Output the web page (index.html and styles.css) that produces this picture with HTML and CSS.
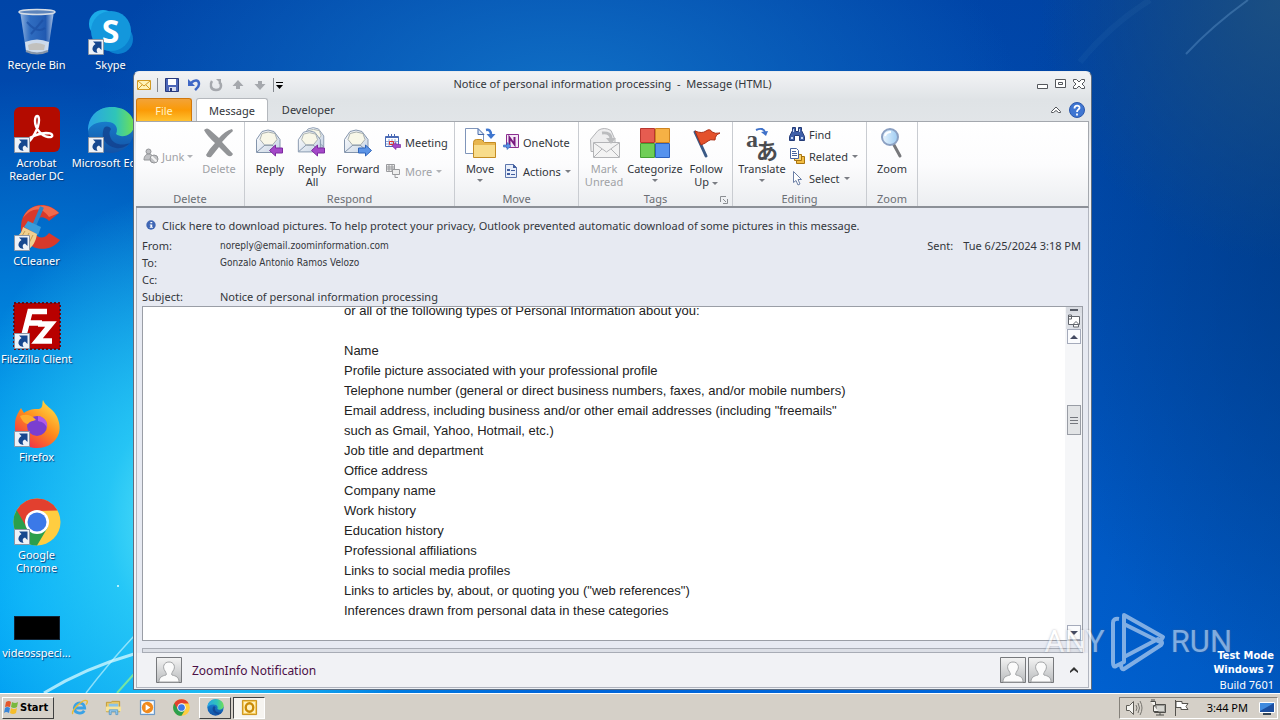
FILE: index.html
```html
<!DOCTYPE html>
<html lang="en">
<head>
<meta charset="utf-8">
<title>Notice of personal information processing - Message (HTML)</title>
<link rel="stylesheet" href="styles.css">
</head>
<body>
<svg class="defs" aria-hidden="true">
  <defs>
    <linearGradient id="g-env" x1="0" y1="0" x2="1" y2="1"><stop offset="0" stop-color="#fff"/><stop offset="1" stop-color="#c6d3e3"/></linearGradient>
    <linearGradient id="g-bin" x1="0" x2="1"><stop offset="0" stop-color="#c9dcf5" stop-opacity=".75"/><stop offset=".3" stop-color="#4f86cf" stop-opacity=".6"/><stop offset=".75" stop-color="#2f62b4" stop-opacity=".7"/><stop offset="1" stop-color="#d5e4f7" stop-opacity=".85"/></linearGradient>
    <linearGradient id="g-edge1" x1="0" x2="1"><stop offset="0" stop-color="#2aa3e6"/><stop offset=".6" stop-color="#2fc5b8"/><stop offset="1" stop-color="#6fe055"/></linearGradient>
    <linearGradient id="g-edge2" x1="0" y1="0" x2="0" y2="1"><stop offset="0" stop-color="#1a8fdc"/><stop offset="1" stop-color="#1352a6"/></linearGradient>
    <linearGradient id="g-fox" x1=".9" y1="0" x2=".2" y2="1"><stop offset="0" stop-color="#ffe84a"/><stop offset=".5" stop-color="#ff8b1c"/><stop offset="1" stop-color="#f0264f"/></linearGradient>
    <linearGradient id="g-mag" x1="0" x2="1"><stop offset="0" stop-color="#eaf6ff"/><stop offset="1" stop-color="#9ccbf2"/></linearGradient>
    <linearGradient id="g-person" x1="0" y1="0" x2="0" y2="1"><stop offset="0" stop-color="#f4f4f4"/><stop offset="1" stop-color="#b9bbbd"/></linearGradient>

    <symbol id="i-shortcut" viewBox="0 0 16 16"><path fill="#eef2f8" stroke="#8c96a6" d="M.5.5h15v15H.5z"/><path fill="#16478f" d="M5 2.500h8.500V11L11 8.500C8.500 9.500 8 11 9.500 14 4 13.500 2.500 8.500 7.500 5z"/></symbol>
    <symbol id="i-bin" viewBox="0 0 48 48"><path fill="url(#g-bin)" d="M7 3h34l-6 40q-11 5-22 0z"/><path fill="#e9eef5" d="M12 34q12-5 24 0l-1 9q-11 4-22 0z" opacity=".85"/><path fill="#bdb6aa" d="M15 37q8-4 17 0l-1 5H16z" opacity=".7"/><path stroke="#1b4fa3" stroke-width="2" fill="none" opacity=".7" d="M14 14q10 12 18 6M18 26l12-14"/><ellipse cx="24" cy="4" rx="18" ry="2.500" fill="#5d84bb" stroke="#d6dde6" stroke-width="1.500"/><path fill="none" stroke="#8796a9" stroke-width="2" d="M13 43q11 5 22 0"/></symbol>
    <symbol id="i-skype" viewBox="0 0 48 48"><circle cx="16" cy="16" r="14" fill="#1cabe8"/><circle cx="31" cy="31" r="15" fill="#0b80cf"/><circle cx="24" cy="23" r="20" fill="#1397dc"/></symbol>
    <symbol id="i-acrobat" viewBox="0 0 48 48"><rect x="1" y="1" width="46" height="45" rx="6" fill="#b30b00"/><path fill="none" stroke="#fff" stroke-width="2.400" stroke-linejoin="round" d="M14 37c-4-2 7-9 19-10 8 0 8 5 2 4-7-1-13-9-13-16 0-7 4-6 4-1 0 8-7 20-12 23z"/></symbol>
    <symbol id="i-edge" viewBox="0 0 48 48"><circle cx="24" cy="24" r="23" fill="url(#g-edge2)"/><path fill="url(#g-edge1)" d="M1 25C1 9 12 1 25 1c14 0 22 9 22 18 0 10-12 14-18 9 3-6-1-12-8-12C11 15 3 19 1 25z"/><path fill="#123f8c" opacity=".75" d="M17 22c-4 10 2 18 12 20 6 1 11-2 14-5-7 3-18 2-20-7-1-4 0-5 1-7-2-3-5-3-7-1z"/></symbol>
    <symbol id="i-ccleaner" viewBox="0 0 48 48"><path fill="#d8392b" d="M46 9C32-6 9 1 8 22c-1 22 26 31 39 14l-11-7c-6 8-15 5-15-6 0-10 9-13 15-6z"/><path fill="#f06a4d" d="M46 9C34-3 15 0 10 14c9-11 19-11 26-1z"/><path stroke="#2b86cb" stroke-width="4" d="M29 3 21 22"/><path fill="#3a9ddb" d="m15 17 13 6-3 8-14-8z"/><path fill="#f0d08f" d="M10 23 24 30c-1 8-5 13-9 16L1 34c5-2 8-6 9-11z"/><path stroke="#c79a50" fill="none" d="M12 27 6 37M16 29l-6 12M20 31l-6 12"/></symbol>
    <symbol id="i-filezilla" viewBox="0 0 48 48"><path fill="#b80000" d="M1 1h46v46H1z"/><path fill="none" stroke="#5f0d1a" stroke-width="2" stroke-dasharray="2 2" d="M1 1h46v46H1z"/><path fill="none" stroke="#fff" stroke-width="5.500" d="M34 9.500H17L11 33M13.500 21H29M25 22h13L24 39h15"/></symbol>
    <symbol id="i-firefox" viewBox="0 0 48 48"><path fill="url(#g-fox)" d="M30 0c2 6 9 8 13 15 2 3 5 11 3 18-3 9-11 15-22 15C10 48 1 38 2 25c0-8 3-12 6-17l3 5c2-2 4-2 6-3 4-2 9 0 11-2 2-2 1-5 2-8z"/><circle cx="24" cy="26" r="10" fill="#7a3ed0"/><path fill="#ffac2e" d="M7 16c5-2 11-2 16 4-3 1-6 1-8 4-3 0-6-3-8-8z"/><path fill="#b05ae8" d="M25 16c7 1 10 6 9 12-2-5-5-6-9-7z"/></symbol>
    <symbol id="i-chrome" viewBox="0 0 48 48"><circle cx="24" cy="24" r="23.500" fill="#ffcd40"/><path fill="#2b9f4c" d="M3.700 12A23.500 23.500 0 0 0 24 47.500L35 29 24 24z"/><path fill="#e2402f" d="M3.700 12.300A23.500 23.500 0 0 1 44.500 12.500L24 13l-10 17z"/><circle cx="24" cy="24" r="12" fill="#fff"/><circle cx="24" cy="24" r="9.500" fill="#3b79e8"/></symbol>

    <symbol id="i-mail" viewBox="0 0 16 16"><path fill="#fff3b8" stroke="#d19a24" d="M1.500 3.500h13v9h-13z"/><path fill="none" stroke="#d19a24" d="m2 4 6 5 6-5M2 12l4-4m8 4-4-4"/></symbol>
    <symbol id="i-save" viewBox="0 0 16 16"><path fill="#4c66b8" stroke="#27397c" d="M1.500 1.500h13v13h-13z"/><path fill="#fff" d="M4 2h8v6H4z"/><path fill="#d6dcef" d="M5 10h7v4H5z"/><path fill="#27397c" d="M6 11h2v3H6z"/></symbol>
    <symbol id="i-undo" viewBox="0 0 16 16"><path fill="none" stroke="#3f67c5" stroke-width="2.500" d="M5 6c4-4 8-3 8 1 0 3-2 4-4 6"/><path fill="#3f67c5" d="M2 2v7h7z"/></symbol>
    <symbol id="i-redo" viewBox="0 0 16 16"><path fill="none" stroke="#a5a8ad" stroke-width="2.500" d="M4 4c-2 3-2 9 4 9s6-6 3-8"/><path fill="#a5a8ad" d="M8 2h5v5z"/></symbol>
    <symbol id="i-up" viewBox="0 0 16 16"><path fill="#a5a8ad" d="m8 3 5.500 6H10v3H6V9H2.500z"/></symbol>
    <symbol id="i-down" viewBox="0 0 16 16"><path fill="#a5a8ad" d="M8 13 2.500 7H6V4h4v3h3.500z"/></symbol>

    <symbol id="i-junk" viewBox="0 0 16 16"><g fill="#c0c1c4" stroke="#929497"><circle cx="5.500" cy="3.500" r="2.500"/><path d="M1 12c0-4 2-6 5-6s4 2 4 6z"/><circle cx="11" cy="11" r="4"/></g><path stroke="#f4f4f4" stroke-width="2" d="m8.500 8.500 5 5"/></symbol>
    <symbol id="i-delete" viewBox="0 0 32 32"><path fill="#929497" d="M1 3q3-3 6 0l9 8q6-7 13-9l1 2Q24 9 19 15l11 12q-2 4-6 1l-8-8q-4 5-8 10-4 1-5-2 4-7 9-12Q4 9 1 3z"/></symbol>
    <symbol id="env" viewBox="0 0 32 32"><path fill="url(#g-env)" stroke="#8495ac" d="M2.500 12.500 8 4.500q6-3 12 0l6 8v13h-23.500z"/><path fill="#f8f7e8" stroke="#a9b0ae" d="M8 6.500q6-3 13 0l2 6-5 6h-7l-5-6z"/><path fill="none" stroke="#8495ac" d="m3 25 8-7h7l8 7"/></symbol>
    <symbol id="i-reply" viewBox="0 0 32 32"><use href="#env" width="32" height="32"/><path fill="#a448c8" stroke="#7d2ba0" d="m15.500 23.500 6-5.500v3h7v5h-7v3z"/></symbol>
    <symbol id="i-replyall" viewBox="0 0 32 32"><use href="#env" x="5" y="-2" width="28" height="28"/><use href="#env" width="30" height="30" y="1"/><path fill="#a448c8" stroke="#7d2ba0" d="m15.500 23.500 6-5.500v3h7v5h-7v3z"/></symbol>
    <symbol id="i-forward" viewBox="0 0 32 32"><use href="#env" width="32" height="32"/><path fill="#5c94e6" stroke="#2f65bb" d="m29.500 23.500-6-5.500v3h-7v5h7v3z"/></symbol>
    <symbol id="i-meeting" viewBox="0 0 16 16"><path fill="#fff" stroke="#4a6ab5" d="M.5 2.500h13v10H.5z"/><path fill="#4a6ab5" d="M1 2h12v2H1zM3 0h1v3H3zm3 0h1v3H6zm3 0h1v3H9z"/><path stroke="#93a9d8" fill="none" d="M1 7.500h12M1 10h12M4 5v7m3-7v7m3-7v7"/><path fill="none" stroke="#d33" d="M4.500 7.500h4v3h-4z"/><path fill="#a448c8" stroke="#7d2ba0" stroke-width=".7" d="m7 12 4-3.500v2h4.500v3H11v2z"/></symbol>
    <symbol id="i-more" viewBox="0 0 16 16"><path fill="#eee" stroke="#9a9b9e" d="M1.500 1.500h8v7h-8z"/><path stroke="#9a9b9e" d="M2 4h7M2 6h7M4 2v6m3-6v6"/><path fill="#eee" stroke="#9a9b9e" d="M7.500 6.500h7v5h-7zM10 12v2.500h3"/></symbol>
    <symbol id="i-move" viewBox="0 0 32 32"><path fill="#fff" stroke="#7f95ba" d="M1.500 1.500h12l6 6v19h-18z"/><path fill="#dfe9f6" stroke="#4669a8" d="M14 1.500v6h6z"/><path fill="none" stroke="#3f76cf" stroke-width="2.500" d="M22 3q5-1 5 5"/><path fill="#3f76cf" d="M22.500 7h9L27 12z"/><path fill="#e8b64f" stroke="#c48c23" d="M9.500 15.500q0-3 3-3h5l3 3h11v15h-22z"/><path fill="#f8dc8b" d="M10 18h21v12H10z"/></symbol>
    <symbol id="i-onenote" viewBox="0 0 16 16"><path fill="#f4e8f6" stroke="#8b2c8f" d="M3.500.5h12v13h-12z"/><path fill="none" stroke="#7a1a80" stroke-width="2" d="M6.500 11V3.500l5 7V3"/><path fill="#5c94e6" stroke="#2f65bb" stroke-width=".6" d="M.5 11H4V8.500L8 12l-4 3.500V13H.5z"/></symbol>
    <symbol id="i-actions" viewBox="0 0 16 16"><path fill="#e9effa" stroke="#5d76ad" d="M2.500 1.500h8l3 3v10h-11z"/><path fill="#435f9f" d="M10 1v4h4zM4 6h3v2H4zm0 4h3v2H4zM8 7h4v1H8zm0 4h4v1H8z"/></symbol>
    <symbol id="i-unread" viewBox="0 0 32 32"><path fill="#ededee" stroke="#b3b4b7" d="M2.500 12.500 10 3.500q6-4 13 0l4 9v12h-24z"/><path fill="#f3f3f3" stroke="#b3b4b7" d="M5.500 15.500h26v15h-26z"/><path fill="none" stroke="#b3b4b7" d="m6 16 12.500 9L31 16M6 30l8-8m17 8-8-8"/><path fill="none" stroke="#bbbcbe" stroke-width="3" d="M14 6q9-1 9 6"/><path fill="#bbbcbe" d="M18 11h10l-5 6z"/></symbol>
    <symbol id="i-categorize" viewBox="0 0 32 32"><path fill="#e65c50" stroke="#b9372e" d="M1.500 1.500h14v14h-14z"/><path fill="#f6b145" stroke="#cf8420" d="M16.500 1.500h14v14h-14z"/><path fill="#6fce56" stroke="#44a033" d="M1.500 16.500h14v14h-14z"/><path fill="#5592ee" stroke="#2c60bd" d="M16.500 16.500h14v14h-14z"/></symbol>
    <symbol id="i-flag" viewBox="0 0 32 32"><path stroke="#3b5a86" stroke-width="3" stroke-linecap="round" d="m5 5 11 24"/><path fill="#e4512b" stroke="#ac2f16" d="M5 4q7 3 11 0t6 1q3 2 8 1-5 2-5 7-5-1-7 1t-7 4z"/></symbol>
    <symbol id="i-translate" viewBox="0 0 32 32"><path fill="none" stroke="#3e71c9" stroke-width="2" d="M10 3q7-3 9 2"/><path fill="#3e71c9" d="m15 5 7-1-2 5z"/></symbol>
    <symbol id="i-find" viewBox="0 0 16 16"><path fill="#3f5fa9" stroke="#243b77" d="M3.500 1.500h3v4h3v-4h3v3l3 6v4h-5v-5h-5v5h-5v-4l3-6z"/><path fill="#c3d5f3" d="M2 11h2v2H2zm10 0h2v2h-2zM4 3h1v3H4zm6 0h1v3h-1z"/></symbol>
    <symbol id="i-related" viewBox="0 0 16 16"><path fill="#f3bd43" stroke="#a87410" d="M7.500 8.500h8v7h-8z"/><path fill="#f8d77a" stroke="#a87410" d="M5.500 6.500h7v6h-7z"/><path fill="#fff" stroke="#48659f" d="M1.500.5h6l2 2v8h-8z"/><path stroke="#48659f" d="M3 3.500h4M3 5.500h5M3 7.500h5"/></symbol>
    <symbol id="i-select" viewBox="0 0 16 16"><path fill="#fff" stroke="#6b7fa6" d="M4.500 1.500v11l2.500-2 2 4.500 2-1-2-4.500h3.500z"/></symbol>
    <symbol id="i-zoom" viewBox="0 0 32 32"><path stroke="#77787b" stroke-width="3" stroke-linecap="round" d="m18 18 6 11"/><circle cx="14" cy="10" r="8" fill="url(#g-mag)" stroke="#8ba0c2" stroke-width="2"/><path fill="none" stroke="#fff" stroke-width="2" d="M9 9q1-4 6-4"/></symbol>
    <symbol id="i-info" viewBox="0 0 16 16"><circle cx="8" cy="8" r="7.500" fill="#3f66b4"/><path fill="#fff" d="M7 3h3v2H7zM6 7h4v4h1v1.500H6V11h1V8.500H6z"/></symbol>
    <symbol id="i-help" viewBox="0 0 16 16"><circle cx="8" cy="8" r="7.500" fill="#3f76d2" stroke="#2c59ad"/><path fill="none" stroke="#fff" stroke-width="1.800" d="M5.500 6.500c0-4 5.500-3.500 5-.5-.3 1.500-2.500 1.500-2.500 4M8 11.500v2"/></symbol>
    <symbol id="i-person" viewBox="0 0 26 26"><path fill="url(#g-person)" stroke="#77797c" d="M.5.5h25v25H.5z"/><path fill="#fbfbfb" stroke="#a2a4a6" d="M3 25c0-5 3-6 7-7 1-1 0-2-1-4-3-4-1-9 4-9s7 5 4 9c-1 2-2 3-1 4 4 1 7 2 7 7z"/></symbol>

    <symbol id="i-winflag" viewBox="0 0 16 16"><path fill="#e4572b" d="M3 2q3-2 5 0L7 7Q4 6 2 7z"/><path fill="#79b83d" d="M9 2q3 2 6 0l-1 5q-3 2-6 0z"/><path fill="#3a86d8" d="M2 8q2-2 5 0l-1 5q-3-2-5 0z"/><path fill="#f5bd2b" d="M8 8q3 2 6 0l-1 5q-3 2-6 0z"/></symbol>
    <symbol id="i-ie" viewBox="0 0 18 18"><path fill="none" stroke="#3aa2e6" stroke-width="3" d="M3.500 9.500h11c0-7-10.500-7-11 0 0 6 8 7 10.500 3"/><path fill="none" stroke="#e9bb35" stroke-width="1.500" d="M2 16C-1 13 13-1 17 2q1 1-1 4"/></symbol>
    <symbol id="i-explorer" viewBox="0 0 18 18"><path fill="#e9c765" stroke="#c09a36" d="M1.500 3.500h5l1-1h8v11h-14z"/><path fill="#8ac4ea" d="M4 5h10v4H4z"/><path fill="#f7e49c" d="M1 8h16v5H1z"/><path fill="#9ccdf0" stroke="#5d9cc9" d="M4.500 16.500v-5h9v5h-2v-3h-5v3z"/></symbol>
    <symbol id="i-player" viewBox="0 0 18 18"><path fill="#cfe3f5" stroke="#5d8fc4" d="M1.500 1.500h15v15h-15z"/><path fill="#fff" d="M3 3h12v12H3z"/><circle cx="9" cy="9" r="6" fill="#f08a1d"/><path fill="#fff" d="m7 5.500 5 3.500-5 3.500z"/></symbol>
    <symbol id="i-outlook" viewBox="0 0 18 18"><path fill="#f5c64d" stroke="#c88d12" d="M1.500 1.500h15v15h-15z"/><path fill="#fff0bd" d="M3 3h12v12H3z"/><ellipse cx="9" cy="9" rx="4" ry="4.500" fill="none" stroke="#c98a08" stroke-width="2.500"/></symbol>
    <symbol id="i-sound" viewBox="0 0 18 18"><path fill="#f5f4f0" stroke="#5e5c57" d="M1.500 6.500h3l4-4v13l-4-4h-3z"/><path fill="none" stroke="#77756f" d="M11 6q2 3 0 6m2-8q3 5 0 10m2-12q4 7 0 14"/></symbol>
    <symbol id="i-network" viewBox="0 0 18 18"><path fill="#9b9a96" stroke="#4f4e4a" d="M5.500 5.500h11v8h-11z"/><path fill="#d5d5d0" d="M8 7h7v5H8z"/><path stroke="#4f4e4a" d="M7 16h8m-4-2v2"/><path fill="#f5f4f0" stroke="#4f4e4a" d="M1.500 2.500h5v4h-2v6h5M3 0v3m2-3v3"/></symbol>
    <symbol id="i-action" viewBox="0 0 18 18"><path fill="none" stroke="#55534e" d="M2.500 1v16"/><path fill="#fff" stroke="#55534e" d="M3 2.500h6v2h6l-2 3 2 3H8v-2H3z"/></symbol>
    <symbol id="i-screen" viewBox="0 0 18 18"><path fill="#1c4f9f" stroke="#fff" d="M1.500 3.500h15v10h-15z"/><path fill="#3f8ade" d="M2 4h14L2 12z"/><path fill="#345" d="M5 14h8v2H5z"/></symbol>
  </defs>
</svg>

<div class="screen">
  <main class="desktop">
    <svg class="streaks" viewBox="0 0 1280 693" preserveAspectRatio="none" aria-hidden="true">
      <g fill="none" stroke="#d9fbff">
        <path stroke-width="3" opacity=".75" d="M44 693Q85 668 134 654"/>
        <path stroke-width="1.500" opacity=".6" d="M86 693Q108 664 134 636"/>
        <path stroke="#8df08f" stroke-width="2" opacity=".8" d="m117 693 17-19"/>
        <path stroke="#7db4e4" stroke-width="2" opacity=".3" d="M1248 0q-36 26-62 54"/>
        <path stroke="#7db4e4" stroke-width="6" opacity=".06" d="M1150 0q-40 25-70 62"/>
      </g>
      <circle cx="118" cy="586" r="1" fill="#e7ffff"/>
    </svg>

    <nav class="icons" aria-label="Desktop">
      <div class="icon-col">
        <a class="shortcut" href="#bin"><span class="pic"><svg class="art"><use href="#i-bin"/></svg></span><span>Recycle Bin</span></a>
        <a class="shortcut" href="#acrobat"><span class="pic"><svg class="art"><use href="#i-acrobat"/></svg><svg class="arrow"><use href="#i-shortcut"/></svg></span><span>Acrobat<br>Reader DC</span></a>
        <a class="shortcut" href="#ccleaner"><span class="pic"><svg class="art"><use href="#i-ccleaner"/></svg><svg class="arrow"><use href="#i-shortcut"/></svg></span><span>CCleaner</span></a>
        <a class="shortcut" href="#filezilla"><span class="pic"><svg class="art"><use href="#i-filezilla"/></svg><svg class="arrow"><use href="#i-shortcut"/></svg></span><span>FileZilla Client</span></a>
        <a class="shortcut" href="#firefox"><span class="pic"><svg class="art"><use href="#i-firefox"/></svg><svg class="arrow"><use href="#i-shortcut"/></svg></span><span>Firefox</span></a>
        <a class="shortcut" href="#chrome"><span class="pic"><svg class="art"><use href="#i-chrome"/></svg><svg class="arrow"><use href="#i-shortcut"/></svg></span><span>Google<br>Chrome</span></a>
        <a class="shortcut" href="#video"><span class="pic low"><span class="thumb"></span></span><span>videosspeci...</span></a>
      </div>
      <div class="icon-col">
        <a class="shortcut" href="#skype"><span class="pic"><svg class="art"><use href="#i-skype"/></svg><b class="skype-s">S</b><svg class="arrow"><use href="#i-shortcut"/></svg></span><span>Skype</span></a>
        <a class="shortcut" href="#edge"><span class="pic"><svg class="art"><use href="#i-edge"/></svg><svg class="arrow"><use href="#i-shortcut"/></svg></span><span>Microsoft Edge</span></a>
      </div>
    </nav>

    <section class="window" aria-label="Message">
      <header class="titlebar">
        <div class="quick">
          <button aria-label="Message menu"><svg><use href="#i-mail"/></svg></button>
          <i class="bar"></i>
          <button class="save" aria-label="Save"><svg><use href="#i-save"/></svg></button>
          <button aria-label="Undo"><svg><use href="#i-undo"/></svg></button>
          <button aria-label="Redo"><svg><use href="#i-redo"/></svg></button>
          <button aria-label="Previous item"><svg><use href="#i-up"/></svg></button>
          <button aria-label="Next item"><svg><use href="#i-down"/></svg></button>
          <i class="bar"></i>
          <button class="customize" aria-label="Customize toolbar"><svg viewBox="0 0 8 8"><path d="M0 1h7v1H0zM0 4h7L3.500 8z"/></svg></button>
        </div>
        <h1>Notice of personal information processing &nbsp;-&nbsp; Message (HTML)</h1>
        <div class="winctl">
          <button aria-label="Minimize"><svg viewBox="0 0 12 12"><path fill="#fff" stroke="#54575c" d="M.5 6.500h10v4H.5z"/></svg></button>
          <button aria-label="Restore"><svg viewBox="0 0 12 12"><path fill="#fff" stroke="#54575c" d="M.5 1.500h10v8H.5zM3.500 4.500h4v2h-4z"/></svg></button>
          <button aria-label="Close"><svg viewBox="0 0 12 12"><path fill="#fff" stroke="#54575c" d="M.5 1.500h3L6 4l2.500-2.500h3v2L9 6l2.500 2.500v2h-3L6 8l-2.500 2.500h-3v-2L3 6 .5 3.500z"/></svg></button>
        </div>
      </header>

      <div class="tabs">
        <button class="tab file">File</button>
        <button class="tab active">Message</button>
        <button class="tab last">Developer</button>
        <span class="tab-tools">
          <button aria-label="Minimize ribbon"><svg class="chev" viewBox="0 0 10 8"><path fill="#fff" stroke="#54575c" d="M5 1 .5 5.500v1h2L5 4.500l2.500 2h2v-1z"/></svg></button>
          <button aria-label="Help"><svg class="help"><use href="#i-help"/></svg></button>
        </span>
      </div>

      <div class="ribbon">
        <section class="group g-delete">
          <div class="cmds">
            <div class="stack one"><button class="small junk off"><svg><use href="#i-junk"/></svg>Junk<i class="dd"></i></button></div>
            <button class="big off"><svg><use href="#i-delete"/></svg><span>Delete</span></button>
          </div>
          <h2>Delete</h2>
        </section>
        <section class="group g-respond">
          <div class="cmds">
            <button class="big"><svg><use href="#i-reply"/></svg><span>Reply</span></button>
            <button class="big"><svg><use href="#i-replyall"/></svg><span>Reply<br>All</span></button>
            <button class="big mid"><svg><use href="#i-forward"/></svg><span>Forward</span></button>
            <div class="stack"><button class="small"><svg><use href="#i-meeting"/></svg>Meeting</button><button class="small off"><svg><use href="#i-more"/></svg>More<i class="dd"></i></button></div>
          </div>
          <h2>Respond</h2>
        </section>
        <section class="group g-move">
          <div class="cmds">
            <button class="big"><svg><use href="#i-move"/></svg><span>Move</span><i class="dd"></i></button>
            <div class="stack"><button class="small"><svg><use href="#i-onenote"/></svg>OneNote</button><button class="small"><svg><use href="#i-actions"/></svg>Actions<i class="dd"></i></button></div>
          </div>
          <h2>Move</h2>
        </section>
        <section class="group g-tags">
          <div class="cmds">
            <button class="big off"><svg><use href="#i-unread"/></svg><span>Mark<br>Unread</span></button>
            <button class="big wide"><svg><use href="#i-categorize"/></svg><span>Categorize</span><i class="dd"></i></button>
            <button class="big"><svg><use href="#i-flag"/></svg><span>Follow<br>Up <i class="dd"></i></span></button>
          </div>
          <h2>Tags</h2>
          <button class="launcher" aria-label="Tags options"><svg viewBox="0 0 8 8"><path fill="none" stroke="#8b8e93" d="M.5 6V.5H6M3 3l3 3M7.500 3v4.500H3"/></svg></button>
        </section>
        <section class="group g-editing">
          <div class="cmds">
            <button class="big mid"><span class="translate-pic"><svg><use href="#i-translate"/></svg><b class="latin">a</b><b class="kana">あ</b></span><span>Translate</span><i class="dd"></i></button>
            <div class="stack three"><button class="small"><svg><use href="#i-find"/></svg>Find</button><button class="small"><svg><use href="#i-related"/></svg>Related<i class="dd"></i></button><button class="small"><svg><use href="#i-select"/></svg>Select<i class="dd"></i></button></div>
          </div>
          <h2>Editing</h2>
        </section>
        <section class="group g-zoom">
          <div class="cmds"><button class="big"><svg><use href="#i-zoom"/></svg><span>Zoom</span></button></div>
          <h2>Zoom</h2>
        </section>
      </div>

      <div class="content">
        <button class="infobar"><svg><use href="#i-info"/></svg>Click here to download pictures. To help protect your privacy, Outlook prevented automatic download of some pictures in this message.</button>
        <div class="head">
          <dl>
            <dt>From:</dt><dd class="person">noreply@email.zoominformation.com</dd>
            <dt>To:</dt><dd class="person">Gonzalo Antonio Ramos Velozo</dd>
            <dt>Cc:</dt><dd></dd>
            <dt>Subject:</dt><dd>Notice of personal information processing</dd>
          </dl>
          <p class="sent"><span>Sent:</span><time>Tue 6/25/2024 3:18 PM</time></p>
        </div>

        <div class="reader">
          <article class="mail">
            <p class="cut">or all of the following types of Personal Information about you:</p>
            <p>Name</p>
            <p>Profile picture associated with your professional profile</p>
            <p>Telephone number (general or direct business numbers, faxes, and/or mobile numbers)</p>
            <p>Email address, including business and/or other email addresses (including "freemails"<br>such as Gmail, Yahoo, Hotmail, etc.)</p>
            <p>Job title and department</p>
            <p>Office address</p>
            <p>Company name</p>
            <p>Work history</p>
            <p>Education history</p>
            <p>Professional affiliations</p>
            <p>Links to social media profiles</p>
            <p>Links to articles by, about, or quoting you ("web references")</p>
            <p>Inferences drawn from personal data in these categories</p>
          </article>
          <div class="scroll">
            <button class="split" aria-label="Split"></button>
            <button class="ruler" aria-label="Ruler"><svg viewBox="0 0 14 14"><path fill="#fff" stroke="#62666d" d="M1.500 2.500h11v8h-11zM1.500 1h3v4h-3zM6.500 10 9 7.500l2.500 2.500v3h-5z"/></svg></button>
            <button class="step" aria-label="Scroll up"><svg viewBox="0 0 8 4"><path fill="#444b62" d="M0 4h8L4 0z"/></svg></button>
            <div class="track"><div class="handle"><i></i><i></i><i></i></div></div>
            <button class="step" aria-label="Scroll down"><svg viewBox="0 0 8 4"><path fill="#444b62" d="M0 0h8L4 4z"/></svg></button>
          </div>
        </div>
        <div class="splitter"></div>
        <footer class="people">
          <svg class="avatar"><use href="#i-person"/></svg>
          <a href="#sender">ZoomInfo Notification</a>
          <span class="others"><svg class="avatar"><use href="#i-person"/></svg><svg class="avatar"><use href="#i-person"/></svg></span>
          <button aria-label="Expand people pane"><svg viewBox="0 0 8 6"><path fill="#333" d="M4 0 0 4v2l4-3 4 3V4z"/></svg></button>
        </footer>
      </div>
    </section>

    <div class="watermark">
      <span>ANY</span>
      <svg viewBox="0 0 56 62"><g fill="none" stroke="#fff" stroke-width="4" stroke-linejoin="round"><path d="M9 8q-6-1-6 4v39q0 6 3 4l8-4V4l39 22-3 5-36-18"/><path d="m14 46 34-18q6 3 3 6L14 58q-3 1-3-5"/></g></svg>
      <span>RUN</span>
    </div>
    <p class="build"><b>Test Mode</b><b>Windows 7</b><span>Build 7601</span></p>
  </main>

  <footer class="taskbar">
    <button class="start"><svg><use href="#i-winflag"/></svg>Start</button>
    <button class="task" aria-label="Internet Explorer"><svg><use href="#i-ie"/></svg></button>
    <button class="task" aria-label="Explorer"><svg><use href="#i-explorer"/></svg></button>
    <button class="task" aria-label="Media Player"><svg><use href="#i-player"/></svg></button>
    <button class="task" aria-label="Chrome"><svg><use href="#i-chrome"/></svg></button>
    <button class="task open" aria-label="Edge"><svg><use href="#i-edge"/></svg></button>
    <button class="task current" aria-label="Outlook"><svg><use href="#i-outlook"/></svg></button>
    <div class="tray">
      <button aria-label="Volume"><svg><use href="#i-sound"/></svg></button>
      <button aria-label="Network"><svg><use href="#i-network"/></svg></button>
      <button aria-label="Action Center"><svg><use href="#i-action"/></svg></button>
      <time>3:44 PM</time>
      <button aria-label="Show desktop"><svg><use href="#i-screen"/></svg></button>
    </div>
  </footer>
</div>
</body>
</html>
```
FILE: styles.css
```css
* { box-sizing: border-box; }
body { margin: 0; font: 11px/13px "Noto Sans", "Open Sans", sans-serif; color: #33363b; }
button { margin: 0; padding: 0; border: 0; background: none; font: inherit; color: inherit; }
h1, h2, p, dl, dd { margin: 0; font-size: inherit; font-weight: normal; }
a { color: inherit; text-decoration: none; }
svg { display: block; }
.defs { position: absolute; width: 0; height: 0; }

.screen { display: flex; flex-direction: column; height: 100vh; overflow: hidden; }

/* Desktop and wallpaper */
.desktop {
  position: relative; flex: 1; min-height: 0; overflow: hidden;
  background:
    radial-gradient(ellipse 240px 260px at 100% 0, rgba(32, 82, 128, .85), transparent),
    radial-gradient(ellipse 340px 520px at 106% 30%, rgba(0, 52, 116, .6), transparent),
    radial-gradient(ellipse 240px 330px at 190px 520px, #62e8f8 0, rgba(50, 212, 248, .75) 35%, rgba(0, 165, 245, 0) 100%),
    radial-gradient(ellipse 520px 520px at 30px 600px, #00a8f8 0, rgba(0, 160, 240, .8) 40%, transparent 100%),
    radial-gradient(ellipse 460px 240px at 560px 100px, #1070c6, transparent),
    linear-gradient(90deg, transparent 75%, rgba(0, 50, 120, .25)),
    linear-gradient(180deg, #0045a8 0, #0050b8 40%, #0066da 100%);
}
.streaks { position: absolute; inset: 0; width: 100%; height: 100%; }

.icons { position: absolute; left: 0; top: 8px; display: flex; gap: 1px; }
.icon-col { display: flex; flex-direction: column; width: 73px; }
.shortcut {
  display: flex; flex-direction: column; align-items: center; gap: 2px; height: 98px;
  color: #fff; text-align: center; white-space: nowrap; text-shadow: 1px 1px 1px #0a3a78;
}
.pic { position: relative; display: flex; align-items: center; justify-content: center; width: 48px; height: 48px; }
.pic.low { align-items: flex-end; padding-bottom: 4px; }
.art { width: 48px; height: 48px; }
.arrow { position: absolute; left: 1px; bottom: 1px; width: 16px; height: 16px; }
.skype-s { position: absolute; inset: 0; font: bold 32px/46px "Noto Sans", sans-serif; text-shadow: none; }
.thumb { width: 46px; height: 24px; background: #000; border: 1px solid #123; }

/* Message window */
.window {
  position: absolute; left: 133px; right: 188px; top: 71px; bottom: 3px;
  display: flex; flex-direction: column; padding: 0 2px 1px;
  border: 1px solid #5e6d80; border-top-color: #e9ecef; border-radius: 6px 6px 0 0;
  background: linear-gradient(#f2f3f5 0, #dfe3e6 28px, #e3e6e9 60px, #f0f2f5 80px);
}
.titlebar { display: grid; grid-template-columns: 1fr auto 1fr; align-items: center; height: 26px; padding-bottom: 3px; }
.quick { display: flex; align-items: center; gap: 6px; padding-top: 2px; }
.quick button, .quick button svg { width: 16px; height: 16px; }
.quick .bar { width: 1px; height: 14px; background: #85898f; }
.quick .customize, .quick .customize svg { width: 8px; height: 8px; }
.quick .bar + .customize { margin-left: -4px; }
.quick .bar { margin-left: -1px; }
.winctl { display: flex; justify-content: flex-end; gap: 6px; padding-right: 4px; }
.winctl svg { width: 12px; height: 12px; }

.tabs { display: flex; align-items: stretch; height: 23px; }
.tab { padding: 0 12px; border-radius: 3px 3px 0 0; }
.tab.last { padding-left: 14px; }
.tab.file { width: 56px; margin-right: 4px; color: #fff3c4; border: 1px solid #d1780c; border-bottom: 0; background: linear-gradient(#f2a338, #fb9a06 50%, #ffc02e); }
.tab.active { border: 1px solid #b4b8bd; border-bottom: 0; background: #fff; }
.tab-tools { display: flex; align-items: center; gap: 8px; margin-left: auto; padding-right: 4px; }
.chev { width: 10px; height: 8px; }
.help { width: 16px; height: 16px; }

.ribbon {
  display: flex; height: 87px; border: 1px solid #a4a8ae; border-width: 1px 1px 1px 0; border-bottom: 2px solid #8c9097;
  background: linear-gradient(#fff 0, #fcfcfd 50%, #eceef1 100%);
}
.group { position: relative; display: flex; flex-direction: column; padding: 4px 4px 0; border-right: 1px solid #c9ccd1; }
.g-delete { width: 109px; } .g-respond { width: 210px; } .g-move { width: 124px; }
.g-tags { width: 154px; } .g-editing { width: 134px; } .g-zoom { width: 51px; }
.group h2 { height: 14px; text-align: center; color: #6b6e74; }
.cmds { display: flex; flex: 1; min-height: 0; }
.big { display: flex; flex: none; flex-direction: column; align-items: center; width: 42px; padding-top: 1px; }
.big.mid { width: 50px; } .big.wide { width: 60px; }
.big svg { width: 32px; height: 32px; margin-bottom: 3px; }
.big > .dd { margin-top: 4px; }
.off { color: #a0a2a6; }
.dd { display: inline-block; border: 3px solid transparent; border-top-color: #7a7d83; border-bottom: 0; vertical-align: middle; }
.off .dd { border-top-color: #b0b2b6; }
.stack { display: flex; flex: 1; flex-direction: column; gap: 13px; padding: 8px 0 0 2px; }
.stack.three { gap: 6px; padding-top: 0; }
.stack.one { padding: 22px 0 0 3px; }
.small { display: flex; align-items: center; gap: 4px; height: 16px; white-space: nowrap; }
.small.junk { gap: 3px; }
.small svg { width: 16px; height: 16px; }
.launcher { position: absolute; right: 4px; bottom: 2px; }
.launcher svg { width: 8px; height: 8px; }
.translate-pic { position: relative; display: block; width: 32px; height: 35px; color: #4a4c50; }
.translate-pic b { position: absolute; }
.latin { left: 0; top: 2px; font: bold 24px/20px "Liberation Serif", serif; }
.kana { right: 0; bottom: 3px; font: bold 22px/20px "Noto Sans CJK JP", sans-serif; }

/* Header fields */
.content { display: flex; flex: 1; flex-direction: column; min-height: 0; padding: 8px 5px 0; border: 1px solid #b1b5bf; border-top: 0; background: #e7eaf2; }
.infobar { display: flex; align-items: center; gap: 6px; height: 18px; padding-left: 4px; white-space: nowrap; }
.infobar svg { width: 10px; height: 10px; }
.head { display: flex; justify-content: space-between; padding: 3px 2px 1px 0; }
.head dl { display: grid; grid-template-columns: 78px auto; grid-auto-rows: 17px; line-height: 17px; }
.person { font-family: "DejaVu Sans Condensed", "DejaVu Sans", sans-serif; font-size: 10px; }
.sent { display: flex; gap: 10px; line-height: 17px; }

/* Reading pane */
.reader { display: flex; flex: 1; min-height: 0; border: 1px solid #9a9ea6; background: #fff; overflow: hidden; }
.mail { flex: 1; padding-left: 201px; overflow: hidden; font: 13px/20px "Liberation Sans", sans-serif; color: #222; }
.mail .cut { margin: -6px 0 20px; }
.scroll { display: flex; flex-direction: column; align-items: center; width: 17px; background: #f5f6f8; }
.split { width: 16px; height: 6px; border: solid #d9dce2; border-width: 2px 4px; background: #565b66; }
.ruler { width: 16px; height: 16px; background: #dde0e6; }
.ruler svg { width: 14px; height: 14px; margin: auto; }
.step { display: flex; align-items: center; justify-content: center; width: 14px; height: 15px; border: 1px solid #a5abbb; background: #fafbfd; }
.step svg { width: 8px; height: 4px; }
.track { flex: 1; padding-top: 61px; }
.handle { display: flex; flex-direction: column; align-items: center; justify-content: center; gap: 2px; width: 14px; height: 30px; border: 1px solid #999da5; background: #e2e4e6; }
.handle i { width: 8px; height: 1px; background: #74777d; }

.splitter { flex: none; height: 5px; margin-top: 7px; border: 1px solid #a8acb5; background: #dcdfe6; }
.people { display: flex; flex: none; align-items: center; height: 34px; margin: 0 -5px; padding: 0 10px 0 19px; background: #f1f2f5; }
.people a { margin-left: 10px; font-size: 12px; color: #4b1046; }
.avatar { width: 26px; height: 26px; }
.others { display: flex; gap: 2px; margin-left: auto; }
.people button { margin-left: 16px; }
.people button svg { width: 8px; height: 6px; }

/* Overlays on the wallpaper */
.watermark { position: absolute; right: 48px; bottom: 20px; display: flex; align-items: center; gap: 5px; opacity: .5; color: #fff; font: 31px/62px Roboto, "Liberation Sans", sans-serif; text-shadow: 0 0 2px #667; }
.watermark svg { width: 56px; height: 62px; }
.build { position: absolute; right: 6px; bottom: 0; display: flex; flex-direction: column; color: #fff; text-align: right; line-height: 14px; }
.build b { font-family: "DejaVu Sans Condensed", "DejaVu Sans", sans-serif; }
.build span { line-height: 16px; }

/* Taskbar */
.taskbar { display: flex; flex: none; align-items: center; height: 27px; padding: 2px 2px 1px; border-top: 1px solid #fff; background: #d5d0c8; color: #000; }
.start { display: flex; align-items: center; gap: 1px; width: 52px; height: 22px; margin-right: 9px; border: 1px solid; border-color: #fff #404040 #404040 #fff; font: bold 11px/16px "DejaVu Sans Condensed", "DejaVu Sans", sans-serif; }
.start svg { width: 16px; height: 16px; }
.task { display: flex; align-items: center; justify-content: center; width: 32px; height: 22px; margin-right: 2px; }
.task svg { width: 17px; height: 17px; }
.task.open { border: 1px solid; border-color: #fff #404040 #404040 #fff; }
.task.current { border: 1px solid; border-color: #404040 #fff #fff #404040; background: #f6f4f0; }
.tray { display: flex; align-items: center; gap: 6px; height: 22px; margin-left: auto; padding: 0 1px 0 5px; border: 1px solid; border-color: #85817a #fff #fff #85817a; }
.tray svg { width: 18px; height: 18px; }
.tray time { margin: 0 4px 0 10px; }
```
